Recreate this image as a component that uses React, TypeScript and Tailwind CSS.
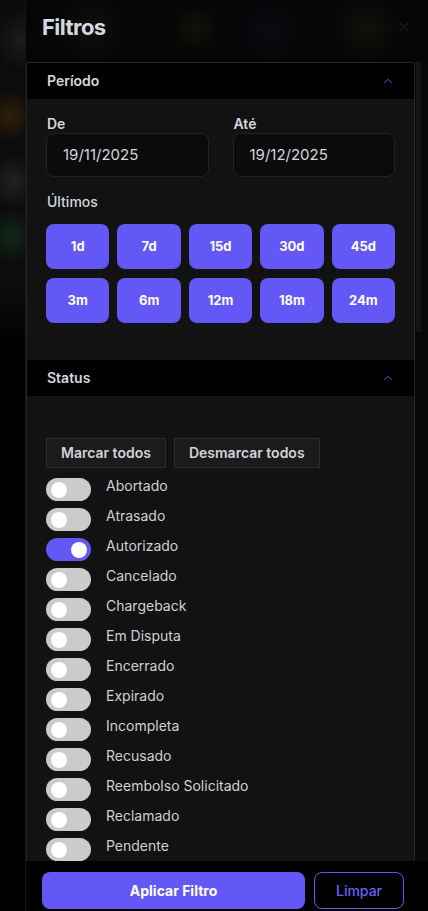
import React, { useState } from 'react';
import { ChevronUp, X } from 'lucide-react';
import clsx from 'clsx';

const ranges = ['1d', '7d', '15d', '30d', '45d', '3m', '6m', '12m', '18m', '24m'];

const statuses = [
  'Abortado',
  'Atrasado',
  'Autorizado',
  'Cancelado',
  'Chargeback',
  'Em Disputa',
  'Encerrado',
  'Expirado',
  'Incompleta',
  'Recusado',
  'Reembolso Solicitado',
  'Reclamado',
  'Pendente',
];

function Toggle({ on, onClick }: { on: boolean; onClick: () => void }) {
  return (
    <button
      onClick={onClick}
      className={clsx(
        'relative h-[23px] w-[45px] flex-none rounded-full',
        on ? 'bg-[#6358f5]' : 'bg-[#cbcbcb]'
      )}
    >
      <span
        className={clsx(
          'absolute top-[3.5px] h-4 w-4 rounded-full bg-white',
          on ? 'left-[25px]' : 'left-[4.5px]'
        )}
      />
    </button>
  );
}

function SectionHeader({ title }: { title: string }) {
  return (
    <div className="flex h-9 items-center justify-between bg-black pl-5 pr-[19px]">
      <span className="text-sm font-semibold text-[#d3d7de]">{title}</span>
      <ChevronUp className="h-3.5 w-3.5 text-[#2f6fe0]" strokeWidth={1.6} />
    </div>
  );
}

export default function App() {
  const [active, setActive] = useState<string[]>(['Autorizado']);

  const flip = (s: string) =>
    setActive((a) => (a.includes(s) ? a.filter((x) => x !== s) : [...a, s]));

  return (
    <div
      className="flex h-[911px] w-[428px] overflow-hidden bg-black"
      style={{ fontFamily: 'Inter, "Noto Sans", sans-serif' }}
    >
      {/* dimmed page behind the drawer */}
      <div className="h-full w-[25px] flex-none bg-[radial-gradient(ellipse_28px_30px_at_22px_40px,rgba(60,60,60,0.35),transparent),radial-gradient(ellipse_26px_26px_at_10px_116px,rgba(90,58,0,0.45),transparent),radial-gradient(ellipse_26px_28px_at_14px_182px,rgba(60,60,66,0.45),transparent),radial-gradient(ellipse_26px_28px_at_12px_236px,rgba(20,70,42,0.5),transparent),linear-gradient(to_bottom,#0b0b0b_0%,#0c0c0c_32%,#000_38%,#000_100%)]" />

      {/* drawer */}
      <div className="flex h-full flex-1 flex-col border-l border-[#161616] bg-[#050505]">
        <div className="flex h-[62px] flex-none items-center justify-between bg-[radial-gradient(circle_at_65px_28px,rgba(255,255,255,0.04),transparent_40px),radial-gradient(circle_at_170px_28px,rgba(70,100,40,0.14),transparent_28px),radial-gradient(circle_at_245px_32px,rgba(30,30,70,0.2),transparent_38px),radial-gradient(circle_at_340px_28px,rgba(90,90,60,0.14),transparent_36px)] pb-2 pl-4 pr-4">
          <h1 className="text-[22px] font-bold tracking-tight text-[#d5d9df]">Filtros</h1>
          <X className="h-4 w-4 text-[#1a1a1a]" />
        </div>

        <div className="flex min-h-0 flex-1">
          <div className="min-h-0 w-[389px] flex-none overflow-hidden rounded-t-[3px] border-x border-t border-[#262626] bg-[#121212]">
            <SectionHeader title="Período" />
            <div className="px-[19px] pb-[37px] pt-4">
              <div className="grid grid-cols-2 gap-6">
                {[
                  ['De', '19/11/2025'],
                  ['Até', '19/12/2025'],
                ].map(([label, value]) => (
                  <div key={label}>
                    <div className="h-[18px] pl-px text-sm font-semibold leading-[18px] text-[#d3d7de]">{label}</div>
                    <div className="flex h-11 items-center rounded-lg border border-[#222] bg-[#0b0b0c] pl-4 text-[15px] text-[#d3d7de]">
                      {value}
                    </div>
                  </div>
                ))}
              </div>
              <div className="mt-4 h-[18px] pl-px text-sm font-medium leading-[18px] text-[#d3d7de]">Últimos</div>
              <div className="mt-[13px] grid grid-cols-5 gap-x-2 gap-y-[9px]">
                {ranges.map((r) => (
                  <button
                    key={r}
                    className="flex h-[45px] items-center justify-center rounded-lg bg-[#6358f5] text-[13px] font-bold text-white"
                  >
                    {r}
                  </button>
                ))}
              </div>
            </div>

            <SectionHeader title="Status" />
            <div className="px-[19px] pt-[42px]">
              <div className="flex gap-2">
                <button className="h-[30px] border border-[#2c2c2c] bg-[#1b1b1b] px-[14px] text-sm font-semibold text-[#d0d4db]">
                  Marcar todos
                </button>
                <button className="h-[30px] border border-[#2c2c2c] bg-[#1b1b1b] px-[14px] text-sm font-semibold text-[#d0d4db]">
                  Desmarcar todos
                </button>
              </div>
              <ul className="mt-[10px] flex flex-col">
                {statuses.map((s) => (
                  <li key={s} className="flex h-[30px] items-start gap-[15px]">
                    <Toggle on={active.includes(s)} onClick={() => flip(s)} />
                    <span className="-mt-[2px] text-sm leading-5 text-[#cdd1d8]">{s}</span>
                  </li>
                ))}
              </ul>
            </div>
          </div>
          <div className="flex-1 bg-[#070707] pl-px pr-[7px]">
            <div className="h-[270px] w-[5px] bg-[#141414]" />
          </div>
        </div>

        <div className="flex h-[50px] flex-none gap-[9px] bg-black pl-4 pr-6 pt-[11px]">
          <button className="h-[37px] flex-1 rounded-lg bg-[#6358f5] text-sm font-bold text-white">Aplicar Filtro</button>
          <button className="h-[37px] w-[90px] rounded-lg border border-[#6358f5] text-sm font-medium text-[#6a60f5]">
            Limpar
          </button>
        </div>
      </div>
    </div>
  );
}
